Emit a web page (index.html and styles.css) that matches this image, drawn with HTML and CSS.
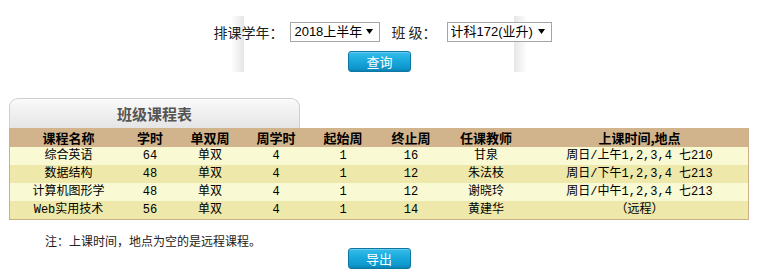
FILE: index.html
```html
<!DOCTYPE html>
<html lang="zh-CN">
<head>
<meta charset="utf-8">
<title>班级课程表</title>
<link rel="stylesheet" href="styles.css">
</head>
<body>
<div class="search">
  <div class="filters">
    <span class="label label-year">排课学年：</span>
    <div class="select-wrap">
      <select class="sel sel-year"><option>2018上半年</option></select>
      <svg class="arrow" width="7" height="5" viewBox="0 0 7 5"><path d="M0 0H7L3.5 5Z" fill="#000"/></svg>
    </div>
    <span class="label label-class">班 级：</span>
    <div class="select-wrap">
      <select class="sel sel-class"><option>计科172(业升)</option></select>
      <svg class="arrow" width="7" height="5" viewBox="0 0 7 5"><path d="M0 0H7L3.5 5Z" fill="#000"/></svg>
    </div>
  </div>
  <div class="actions actions-query"><button class="btn">查询</button></div>
</div>

<div class="schedule">
  <div class="tab">班级课程表</div>
  <table class="grid">
    <colgroup>
      <col class="c1"><col class="c2"><col class="c3"><col class="c4">
      <col class="c5"><col class="c6"><col class="c7"><col class="c8">
    </colgroup>
    <thead>
      <tr>
        <th>课程名称</th><th>学时</th><th>单双周</th><th>周学时</th>
        <th>起始周</th><th>终止周</th><th>任课教师</th><th>上课时间,地点</th>
      </tr>
    </thead>
    <tbody>
      <tr class="odd">
        <td>综合英语</td><td>64</td><td>单双</td><td>4</td><td>1</td><td>16</td><td>甘泉</td><td>周日/上午1,2,3,4 七210</td>
      </tr>
      <tr class="even">
        <td>数据结构</td><td>48</td><td>单双</td><td>4</td><td>1</td><td>12</td><td>朱法枝</td><td>周日/下午1,2,3,4 七213</td>
      </tr>
      <tr class="odd">
        <td>计算机图形学</td><td>48</td><td>单双</td><td>4</td><td>1</td><td>12</td><td>谢晓玲</td><td>周日/中午1,2,3,4 七213</td>
      </tr>
      <tr class="even">
        <td>Web实用技术</td><td>56</td><td>单双</td><td>4</td><td>1</td><td>14</td><td>黄建华</td><td>（远程）</td>
      </tr>
    </tbody>
  </table>
  <p class="note">注：上课时间，地点为空的是远程课程。</p>
  <div class="actions"><button class="btn">导出</button></div>
</div>
</body>
</html>
```

FILE: styles.css
```css
html, body {
  margin: 0;
  padding: 0;
  background: #fff;
}

body {
  font-family: "Noto Sans CJK SC", "Liberation Sans", sans-serif;
  color: #000;
  width: 759px;
  height: 279px;
  overflow: hidden;
}

.search {
  padding-top: 22px;
  height: 50px;
  background:
    linear-gradient(to right, #fff, #e6e6e6) calc(50% - 142px) 16px / 13px 62px no-repeat,
    linear-gradient(to left, #fff, #e6e6e6) calc(50% + 141px) 16px / 13px 62px no-repeat;
}

.filters {
  display: flex;
  justify-content: center;
  align-items: center;
  height: 20px;
  margin-left: 6px;
}

.label {
  font-size: 14px;
  line-height: 20px;
  color: #222;
  white-space: pre;
}

.label-year { margin-right: 7px; }
.label-class { margin-left: 11px; margin-right: 10px; }

.select-wrap {
  position: relative;
  display: flex;
}

.sel {
  appearance: none;
  -webkit-appearance: none;
  height: 20px;
  border: 1px solid #a5a5a5;
  border-radius: 0;
  background: #fff;
  font-family: "Liberation Sans", "Noto Sans CJK SC", sans-serif;
  font-size: 13px;
  color: #000;
  padding: 0 0 0 3px;
  margin: 0;
  line-height: 18px;
}

.sel-year { width: 90px; }
.sel-class { width: 105px; }

.arrow {
  position: absolute;
  right: 7px;
  top: 7px;
  pointer-events: none;
}

.actions {
  display: flex;
  justify-content: center;
}

.actions-query {
  margin-top: 9px;
}

.btn {
  width: 63px;
  height: 21px;
  padding: 0;
  border: 1px solid #0d76a3;
  border-radius: 3px;
  background: linear-gradient(#36bde9, #1aa9dd 45%, #0e97cc 85%, #0b82b3);
  box-shadow: inset 0 1px 0 rgba(255,255,255,0.25);
  color: #fff;
  font-family: "Noto Sans CJK SC", sans-serif;
  font-size: 13px;
  line-height: 19px;
  cursor: pointer;
}

.schedule {
  margin-top: 26px;
  padding: 0 10px 0 9px;
}

.tab {
  box-sizing: border-box;
  width: 291px;
  height: 30px;
  border: 1px solid #cfcfcf;
  border-bottom: none;
  border-radius: 9px 9px 0 0;
  background: linear-gradient(#fafafa, #e5e5e5);
  text-align: center;
  font-size: 15px;
  font-weight: bold;
  color: #555;
  line-height: 30px;
}

.grid {
  width: 740px;
  table-layout: fixed;
  border-collapse: separate;
  border-spacing: 0;
  border: 1px solid #cdaf84;
  border-top: none;
  font-family: "Liberation Mono", "Noto Sans CJK SC", monospace;
  font-size: 12px;
}

.c1 { width: 117px; }
.c2 { width: 46px; }
.c3 { width: 74px; }
.c4 { width: 58px; }
.c5 { width: 76px; }
.c6 { width: 60px; }
.c7 { width: 90px; }
.c8 { width: 217px; }

.grid th {
  background: #d2b48c;
  height: 19px;
  padding: 0;
  font-family: "Noto Sans CJK SC", sans-serif;
  font-size: 13px;
  font-weight: bold;
  line-height: 19px;
  text-align: center;
}

.grid td {
  height: 18px;
  padding: 0;
  line-height: 18px;
  text-align: center;
  white-space: nowrap;
}

.odd td { background: #f9f9d3; }
.even td { background: #eee8aa; }

.note {
  margin: 14px 0 0 36px;
  font-size: 12px;
  line-height: 14px;
  color: #222;
}
```
